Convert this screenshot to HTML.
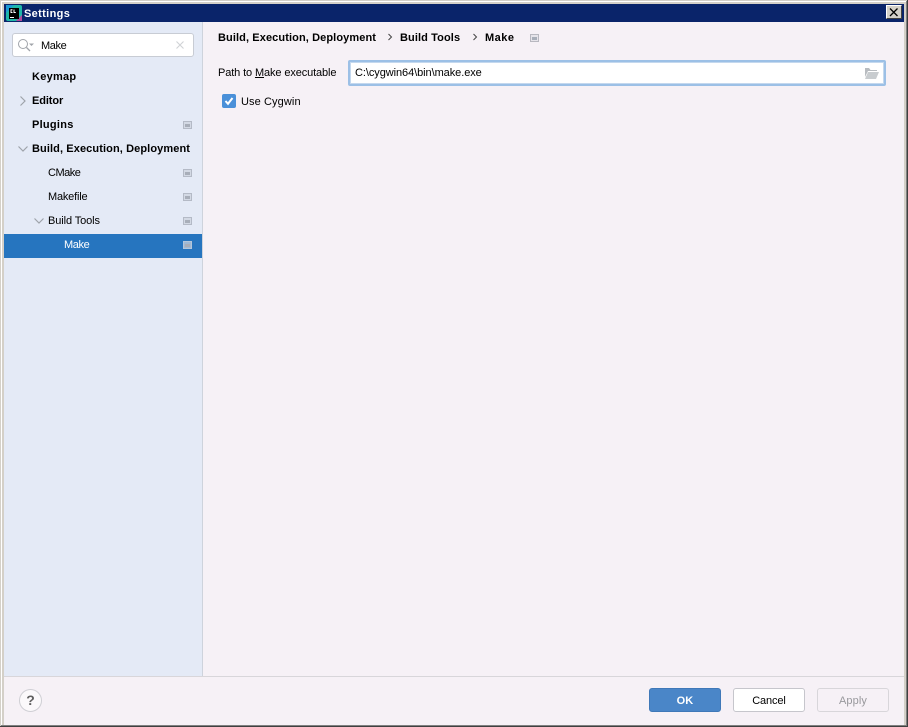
<!DOCTYPE html>
<html><head><meta charset="utf-8">
<style>
html,body{margin:0;padding:0;width:908px;height:727px;overflow:hidden;background:#d4d0c8}
body{position:relative;font-family:"Liberation Sans",sans-serif;font-size:11px;color:#000}
div,span,svg{position:absolute;white-space:nowrap}
.b{font-weight:bold;font-size:11px;letter-spacing:.1px;line-height:14px}
.n{font-size:11px;line-height:14px;letter-spacing:-.12px}
u{text-decoration:underline}
.pin{width:9px;height:8px;background:#d3d9e4;border:1px solid #b4bac6;box-sizing:border-box}
.pin:after{content:"";position:absolute;left:1px;top:2px;width:5px;height:3px;background:#a8aeb9}
</style></head><body>
<div style="left:0;top:0;width:908px;height:1px;background:#d4d0c8"></div>
<div style="left:1px;top:1px;width:906px;height:1px;background:#fff"></div>
<div style="left:1px;top:1px;width:1px;height:725px;background:#fff"></div>
<div style="left:907px;top:0;width:1px;height:727px;background:#404040"></div>
<div style="left:906px;top:1px;width:1px;height:725px;background:#808080"></div>
<div style="left:0;top:726px;width:908px;height:1px;background:#404040"></div>
<div style="left:1px;top:725px;width:906px;height:1px;background:#808080"></div>

<div style="left:4px;top:4px;width:900px;height:18px;background:#0a246a"></div>
<svg style="left:6px;top:5px" width="16" height="16" viewBox="0 0 16 16"><rect width="16" height="16" rx="2" fill="#1fb8a8"/><path d="M0 0h8L0 8z" fill="#1a9ad6"/><path d="M16 16H10l6-6z" fill="#b04a9c"/><rect x="3" y="3" width="10" height="11" fill="#000"/><rect x="4" y="12" width="4" height="1" fill="#fff"/><path d="M6.500 4.800H5V7.500H6.500M8 4.500V7.500H9.800" stroke="#fff" fill="none" stroke-width="1"/></svg>
<div style="left:24px;top:7px;color:#fff;font-weight:bold;font-size:11px;letter-spacing:.35px;line-height:14px">Settings</div>
<div style="left:886px;top:5px;width:16px;height:14px;background:#d4d0c8;border-top:1px solid #fff;border-left:1px solid #fff;border-right:1px solid #404040;border-bottom:1px solid #404040;box-sizing:border-box"></div>
<svg style="left:886px;top:5px" width="16" height="14"><path d="M4 3.500L11.500 11M11.500 3.500L4 11" stroke="#000" stroke-width="1.300" fill="none"/></svg>

<div style="left:4px;top:22px;width:198px;height:654px;background:#e4eaf6"></div>
<div style="left:202px;top:22px;width:1px;height:654px;background:#ced3dc"></div>
<div style="left:203px;top:22px;width:701px;height:654px;background:#f6f1f6"></div>
<div style="left:4px;top:676px;width:900px;height:1px;background:#d8d6da"></div>
<div style="left:4px;top:677px;width:900px;height:48px;background:#f6f1f6"></div>

<div style="left:12px;top:33px;width:182px;height:24px;background:#fff;border:1px solid #c8ccd4;border-radius:3px;box-sizing:border-box"></div>
<svg style="left:17px;top:38px" width="20" height="14" viewBox="0 0 20 14"><circle cx="6" cy="6" r="4.500" fill="none" stroke="#a0a4aa" stroke-width="1"/><path d="M9.500 9.500L13 13" stroke="#a0a4aa" stroke-width="1.300"/><path d="M12 5.500h5l-2.500 2.500z" fill="#a0a4aa"/></svg>
<div class="n" style="left:41px;top:39px;letter-spacing:-.4px">Make</div>
<svg style="left:175px;top:40px" width="10" height="10"><path d="M1.500 1.500L8.500 8.500M8.500 1.500L1.500 8.500" stroke="#d0d3d6" stroke-width="1.100"/></svg>

<div class="b" style="left:32px;top:70px;letter-spacing:.27px">Keymap</div>
<svg style="left:18px;top:95px" width="10" height="12"><path d="M2.500 1.500L7 6L2.500 10.500" fill="none" stroke="#9ea3aa" stroke-width="1.200"/></svg>
<div class="b" style="left:32px;top:94px;letter-spacing:-.1px">Editor</div>
<div class="b" style="left:32px;top:118px;letter-spacing:.27px">Plugins</div>
<svg style="left:17px;top:144px" width="12" height="10"><path d="M1.500 2.500L6 7L10.500 2.500" fill="none" stroke="#9ea3aa" stroke-width="1.200"/></svg>
<div class="b" style="left:32px;top:142px">Build, Execution, Deployment</div>
<div class="n" style="left:48px;top:166px;letter-spacing:-.5px">CMake</div>
<div class="n" style="left:48px;top:190px;letter-spacing:-.2px">Makefile</div>
<svg style="left:33px;top:216px" width="12" height="10"><path d="M1.500 2.500L6 7L10.500 2.500" fill="none" stroke="#9ea3aa" stroke-width="1.200"/></svg>
<div class="n" style="left:48px;top:214px;letter-spacing:-.1px">Build Tools</div>
<div style="left:4px;top:234px;width:198px;height:24px;background:#2675bf"></div>
<div class="n" style="left:64px;top:238px;color:#fff;letter-spacing:-.4px">Make</div>
<div class="pin" style="left:183px;top:121px"></div>
<div class="pin" style="left:183px;top:169px"></div>
<div class="pin" style="left:183px;top:193px"></div>
<div class="pin" style="left:183px;top:217px"></div>
<div class="pin" style="left:183px;top:241px;background:#9fb9d4;border-color:#b4c6da"></div>

<div class="b" style="left:218px;top:31px">Build, Execution, Deployment</div>
<svg style="left:387px;top:33px" width="6" height="8"><path d="M1.500 1L4.500 4L1.500 7" fill="none" stroke="#444" stroke-width="1"/></svg>
<div class="b" style="left:400px;top:31px">Build Tools</div>
<svg style="left:472px;top:33px" width="6" height="8"><path d="M1.500 1L4.500 4L1.500 7" fill="none" stroke="#444" stroke-width="1"/></svg>
<div class="b" style="left:485px;top:31px;letter-spacing:.5px">Make</div>
<div class="pin" style="left:530px;top:34px;background:#e6e4ea;border-color:#b8b8c0"></div>

<div class="n" style="left:218px;top:66px;letter-spacing:-.12px">Path to <u>M</u>ake executable</div>
<div style="left:348px;top:60px;width:538px;height:26px;background:#fff;border:2px solid #9cc0e6;outline:1px solid #c4d8ee;outline-offset:-3px;border-radius:2px;box-sizing:border-box"></div>
<div class="n" style="left:355px;top:66px;letter-spacing:-.07px">C:\cygwin64\bin\make.exe</div>
<svg style="left:864px;top:67px" width="15" height="13" viewBox="0 0 15 13"><path d="M1 1h4l1.500 2H13v1H4L1 10z" fill="#b8bcc0"/><path d="M4 5h11l-3 7H1z" fill="#c8cccf"/></svg>

<div style="left:222px;top:94px;width:14px;height:14px;background:#4a90d9;border-radius:2px"></div>
<svg style="left:222px;top:94px" width="14" height="14"><path d="M3.500 7L6 9.800L10.500 4" fill="none" stroke="#fff" stroke-width="2"/></svg>
<div class="n" style="left:241px;top:95px;letter-spacing:.1px">Use Cygwin</div>

<div style="left:19px;top:689px;width:23px;height:23px;background:#fbf9fb;border:1px solid #cfcfd4;border-radius:50%;box-sizing:border-box"></div>
<div style="left:19px;top:692px;width:23px;text-align:center;font-weight:bold;font-size:14px;line-height:16px;color:#606060">?</div>

<div style="left:649px;top:688px;width:72px;height:24px;background:#4a86c8;border:1px solid #3f78b8;border-radius:3px;box-sizing:border-box"></div>
<div class="b" style="left:649px;top:694px;width:72px;text-align:center;color:#fff">OK</div>
<div style="left:733px;top:688px;width:72px;height:24px;background:#fff;border:1px solid #c6c6cc;border-radius:3px;box-sizing:border-box"></div>
<div class="n" style="left:733px;top:694px;width:72px;text-align:center">Cancel</div>
<div style="left:817px;top:688px;width:72px;height:24px;background:#f6f1f6;border:1px solid #d8d6da;border-radius:3px;box-sizing:border-box"></div>
<div class="n" style="left:817px;top:694px;width:72px;text-align:center;color:#98989c;letter-spacing:.1px">Apply</div>
</body></html>
